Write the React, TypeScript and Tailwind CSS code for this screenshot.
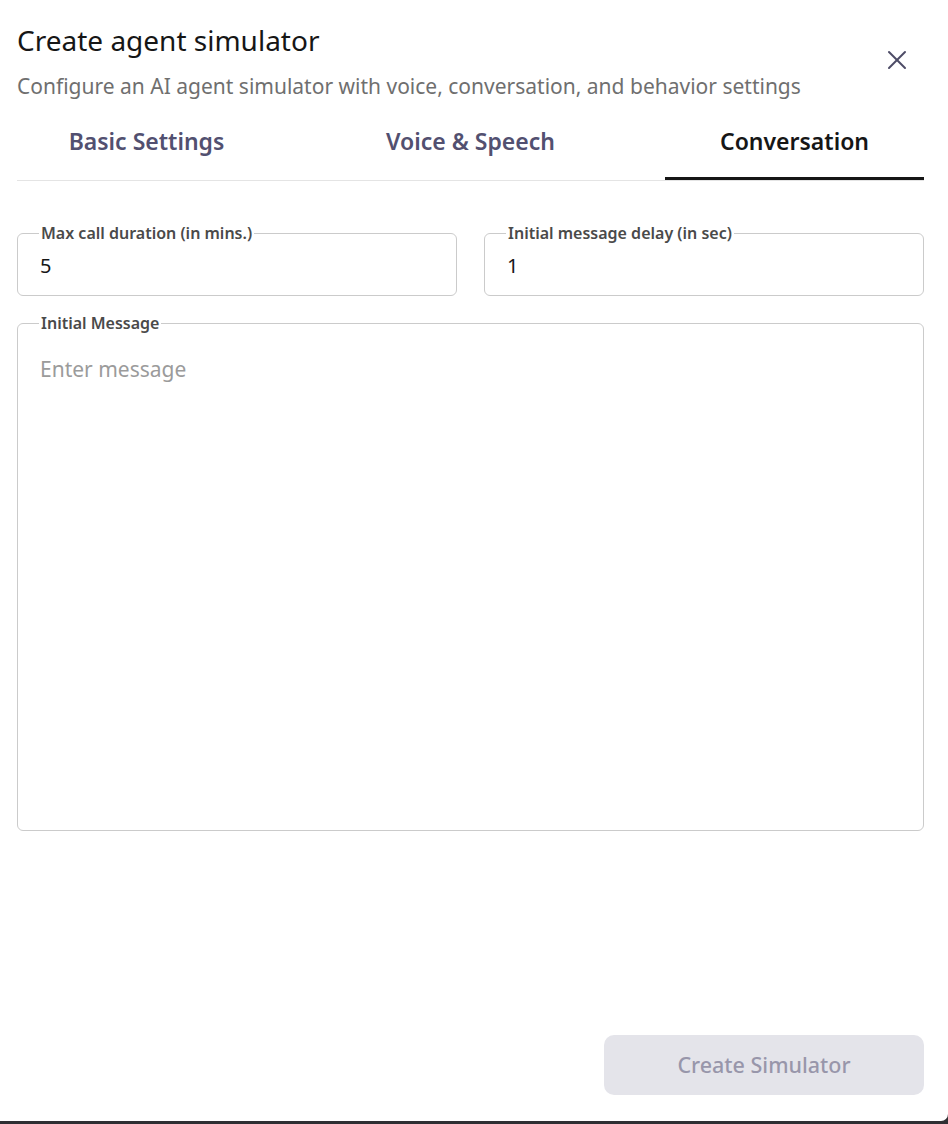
import { X } from "lucide-react"

const tabs = ["Basic Settings", "Voice & Speech", "Conversation"]

function Field({ label, value }: { label: string; value: string }) {
    return (
        <fieldset className="border border-[#cbcbcb] rounded-[6px] px-[22px] pt-[10px] pb-[16px] min-w-0">
            <legend className="px-[2px] -ml-[1px] text-[16px] font-semibold leading-[20px] text-[#4a4a4a]">{label}</legend>
            <div className="text-[20px] leading-[26px] text-[#161616]">{value}</div>
        </fieldset>
    )
}

export default function App() {
    const active = 2

    return (
        <div className="h-[1124px] bg-[#2f2f33]" style={{ fontFamily: '"Noto Sans", "Open Sans", sans-serif' }}>
            <div className="h-[1121px] bg-white rounded-br-[7px] flex flex-col pl-[17px] pr-[24px]">
                <div className="flex justify-between items-start pt-[22px]">
                    <div>
                        <h1 className="text-[28px] leading-[36px] text-[#161616]">Create agent simulator</h1>
                        <p className="mt-[14px] text-[21px] leading-[28px] text-[#6f6f6f]">
                            Configure an AI agent simulator with voice, conversation, and behavior settings
                        </p>
                    </div>
                    <button className="mt-[22px] mr-[11px] text-[#4d4b66]">
                        <X size={32} strokeWidth={1.5} />
                    </button>
                </div>

                <div className="mt-[7px] flex gap-[65px] border-b border-[#e4e4e4]">
                    {tabs.map((t, i) => (
                        <div
                            key={t}
                            className={
                                "flex-1 h-[73px] pb-px flex items-center justify-center text-[23px] font-semibold border-b-[3px] " +
                                (i === active ? "border-[#161616] text-[#161616]" : "border-transparent text-[#525070]")
                            }
                        >
                            {t}
                        </div>
                    ))}
                </div>

                <div className="mt-[42px] grid grid-cols-2 gap-[27px]">
                    <Field label="Max call duration (in mins.)" value="5" />
                    <Field label="Initial message delay (in sec)" value="1" />
                </div>

                <fieldset className="mt-[17px] h-[518px] border border-[#cbcbcb] rounded-[6px] px-[22px] pt-[22px] min-w-0">
                    <legend className="px-[2px] -ml-[1px] text-[16px] font-semibold leading-[20px] text-[#4a4a4a]">Initial Message</legend>
                    <div className="text-[21px] leading-[28px] text-[#9b9b9b]">Enter message</div>
                </fieldset>

                <div className="mt-auto mb-[26px] flex justify-end">
                    <button className="w-[320px] h-[60px] rounded-[10px] bg-[#e4e4ea] text-[21.5px] font-medium text-[#9896aa]">
                        Create Simulator
                    </button>
                </div>
            </div>
        </div>
    )
}
